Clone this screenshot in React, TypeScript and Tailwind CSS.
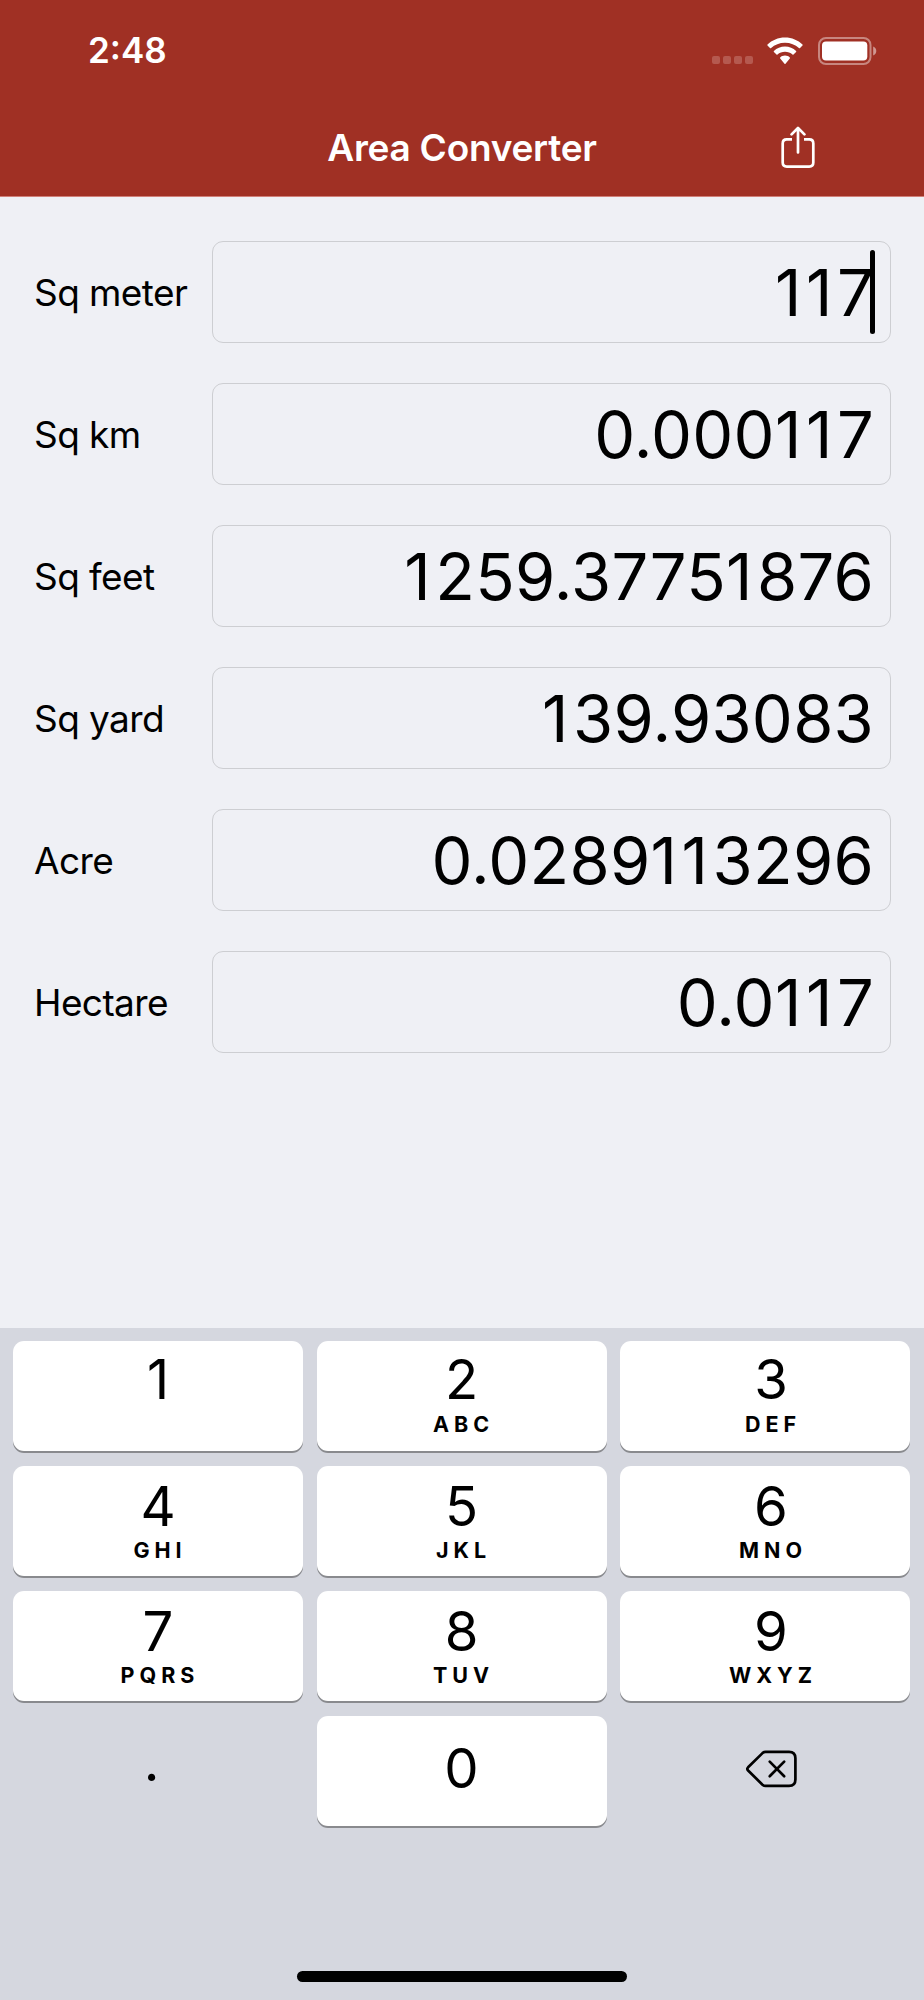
import React from 'react';

interface Field {
  label: string;
  value: string;
  active?: boolean;
}

interface KeyProps {
  digit: string;
  letters?: string;
  firstRow?: boolean;
  lastColumn?: boolean;
}

const fields: Field[] = [
  { label: 'Sq meter', value: '117', active: true },
  { label: 'Sq km', value: '0.000117' },
  { label: 'Sq feet', value: '1259.37751876' },
  { label: 'Sq yard', value: '139.93083' },
  { label: 'Acre', value: '0.0289113296' },
  { label: 'Hectare', value: '0.0117' },
];

const keys: KeyProps[] = [
  { digit: '1', letters: '', firstRow: true },
  { digit: '2', letters: 'ABC', firstRow: true },
  { digit: '3', letters: 'DEF', firstRow: true, lastColumn: true },
  { digit: '4', letters: 'GHI' },
  { digit: '5', letters: 'JKL' },
  { digit: '6', letters: 'MNO', lastColumn: true },
  { digit: '7', letters: 'PQRS' },
  { digit: '8', letters: 'TUV' },
  { digit: '9', letters: 'WXYZ', lastColumn: true },
];

function WifiIcon() {
  return (
    <svg width="36" height="28" viewBox="0 0 36 28" fill="white">
      <path d="M18 0.5C24.9 0.5 31 3.2 35.5 7.5C35.8 7.8 35.8 8.2 35.5 8.5L33 11.1C32.7 11.4 32.2 11.4 31.9 11.1C28.3 7.7 23.4 5.7 18 5.7C12.6 5.7 7.7 7.7 4.1 11.1C3.8 11.4 3.3 11.4 3 11.1L0.5 8.5C0.2 8.2 0.2 7.8 0.5 7.5C5 3.2 11.1 0.5 18 0.5Z" />
      <path d="M18 9.6C22.3 9.6 26.2 11.2 29.1 13.9C29.4 14.2 29.4 14.6 29.1 14.9L26.5 17.5C26.2 17.8 25.8 17.8 25.5 17.5C23.5 15.7 20.9 14.7 18 14.7C15.1 14.7 12.5 15.7 10.5 17.5C10.2 17.8 9.8 17.8 9.5 17.5L6.9 14.9C6.6 14.6 6.6 14.2 6.9 13.9C9.8 11.2 13.7 9.6 18 9.6Z" />
      <path d="M18 18.6C20 18.6 21.6 19.3 22.8 20.4C23.1 20.7 23.1 21.1 22.8 21.4L18.5 26.7C18.2 27 17.8 27 17.5 26.7L13.2 21.4C12.9 21.1 12.9 20.7 13.2 20.4C14.4 19.3 16 18.6 18 18.6Z" />
    </svg>
  );
}

function BatteryIcon() {
  return (
    <svg width="59" height="28" viewBox="0 0 59 28" fill="none">
      <rect x="1" y="1" width="51.5" height="26" rx="7" stroke="white" strokeOpacity="0.42" strokeWidth="2" />
      <rect x="4" y="4.4" width="45.3" height="19.2" rx="4" fill="white" />
      <path d="M55.2 9.5C57 10.2 58.3 12 58.3 14S57 17.8 55.2 18.5Z" fill="white" fillOpacity="0.5" />
    </svg>
  );
}

function ShareIcon() {
  return (
    <svg width="34" height="43" viewBox="0 0 34 43" fill="none" stroke="white" strokeWidth="2.7" strokeLinecap="round" strokeLinejoin="round">
      <path d="M11 13.4H5.8Q1.7 13.4 1.7 17.5V36.5Q1.7 40.6 5.8 40.6H28.2Q32.3 40.6 32.3 36.5V17.5Q32.3 13.4 28.2 13.4H23" strokeLinecap="butt" />
      <path d="M17 26.5V2.5M10.6 8.4L17 1.9L23.4 8.4" />
    </svg>
  );
}

function BackspaceIcon() {
  return (
    <svg width="52" height="38" viewBox="0 0 52 38" fill="none" stroke="black" strokeWidth="2.7" strokeLinecap="round" strokeLinejoin="round">
      <path d="M19.5 1.9H43Q49.4 1.9 49.4 8.3V29.5Q49.4 35.9 43 35.9H19.5Q17.8 35.9 16.5 34.7L2.1 20.5Q0.6 18.9 2.1 17.3L16.5 3.1Q17.8 1.9 19.5 1.9Z" />
      <path d="M23.7 11.6L38.2 26.2M38.2 11.6L23.7 26.2" />
    </svg>
  );
}

// The narrow "1" gets some extra room so it doesn't crowd the next digit
function Value({ text }: { text: string }) {
  return (
    <span className="text-[65px] leading-none tracking-[0.25px]">
      {text.split(/(1+)/).map((part, index) =>
        part.startsWith('1') ? (
          <span key={index} className="tracking-[4.6px]">
            {part}
          </span>
        ) : (
          part
        ),
      )}
    </span>
  );
}

function FieldRow({ label, value, active }: Field) {
  return (
    <div className="flex h-[102px] items-center">
      <span className="w-[178px] shrink-0 text-[37px] leading-none tracking-[-0.6px] whitespace-nowrap">{label}</span>
      <div className="relative flex h-full flex-1 items-center justify-end rounded-[11px] border border-[#cdced2] pr-[16px]">
        <Value text={value} />
        {active && <span className="absolute top-[8px] right-[15px] h-[84px] w-[5px] rounded-full bg-black" />}
      </div>
    </div>
  );
}

function Key({ digit, letters, firstRow, lastColumn }: KeyProps) {
  return (
    <button
      className={`flex h-[110px] flex-col items-center rounded-[11px] bg-white shadow-[0_2px_0_#898a8e] ${
        firstRow ? 'pt-[11px]' : 'pt-[13px]'
      } ${lastColumn ? 'pl-[12px]' : ''}`}
    >
      <span className="text-[54.5px] leading-[54px]">{digit}</span>
      <span
        className={`pl-[4px] text-[21.5px] leading-[22px] font-bold tracking-[5px] ${firstRow ? 'mt-[7px]' : 'mt-[6px]'}`}
      >
        {letters}
      </span>
    </button>
  );
}

function App() {
  return (
    <div className="flex h-[2000px] w-[924px] flex-col overflow-hidden bg-[#eff0f5] font-['Inter',sans-serif] text-black">
      <header className="h-[197px] border-b border-[#d07f78] bg-[#a03024] text-white">
        <div className="flex h-[101px] items-center justify-between pr-[47px] pl-[88px]">
          <span className="text-[35px] leading-none font-semibold">2:48</span>
          <div className="flex items-center">
            <div className="mt-[19px] mr-[14px] flex gap-[3px]">
              {[0, 1, 2, 3].map((dot) => (
                <span key={dot} className="h-[8px] w-[8px] rounded-[2px] bg-[#b5594f]" />
              ))}
            </div>
            <WifiIcon />
            <span className="w-[15px]" />
            <BatteryIcon />
          </div>
        </div>
        <div className="grid h-[93px] grid-cols-[1fr_auto_1fr] items-center">
          <span />
          <h1 className="text-[37px] leading-none font-semibold tracking-[-0.25px]">Area Converter</h1>
          <button className="mr-[109px] justify-self-end">
            <ShareIcon />
          </button>
        </div>
      </header>

      <main className="flex flex-1 flex-col gap-[40.1px] pt-[44px] pr-[33px] pl-[34px]">
        {fields.map((field) => (
          <FieldRow key={field.label} {...field} />
        ))}
      </main>

      <footer className="flex h-[672px] flex-col items-center justify-between bg-[#d5d7df] pt-[13px] pb-[18px]">
        <div className="grid w-full grid-cols-3 gap-x-[13.5px] gap-y-[15px] pr-[14px] pl-[13px]">
          {keys.map((key) => (
            <Key key={key.digit} {...key} />
          ))}
          <button className="flex h-[110px] items-center justify-center pr-[13px] pb-[19px] text-[54.5px] leading-none">.</button>
          <button className="flex h-[110px] items-center justify-center rounded-[11px] bg-white pb-[5px] text-[54.5px] leading-none shadow-[0_2px_0_#898a8e]">
            0
          </button>
          <button className="flex h-[110px] items-center justify-center pb-[5px] pl-[14px]">
            <BackspaceIcon />
          </button>
        </div>
        <span className="h-[11px] w-[330px] rounded-full bg-black" />
      </footer>
    </div>
  );
}

export default App;
